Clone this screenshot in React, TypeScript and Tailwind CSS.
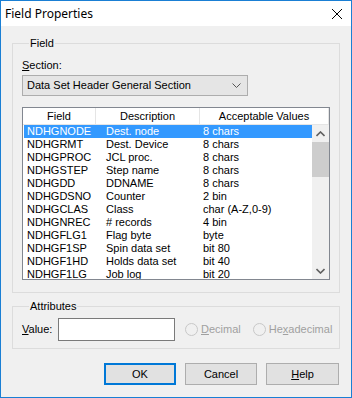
import React from 'react';

const rows = [
  ['NDHGNODE', 'Dest. node', '8 chars'],
  ['NDHGRMT', 'Dest. Device', '8 chars'],
  ['NDHGPROC', 'JCL proc.', '8 chars'],
  ['NDHGSTEP', 'Step name', '8 chars'],
  ['NDHGDD', 'DDNAME', '8 chars'],
  ['NDHGDSNO', 'Counter', '2 bin'],
  ['NDHGCLAS', 'Class', 'char (A-Z,0-9)'],
  ['NDHGNREC', '# records', '4 bin'],
  ['NDHGFLG1', 'Flag byte', 'byte'],
  ['NDHGF1SP', 'Spin data set', 'bit 80'],
  ['NDHGF1HD', 'Holds data set', 'bit 40'],
  ['NDHGF1LG', 'Job log', 'bit 20'],
];

function Radio({ children }: { children: React.ReactNode }) {
  return (
    <div className="flex items-center gap-[3px] text-[#a0a0a0]">
      <span className="w-[13px] h-[13px] rounded-full border border-[#c8c8c8] bg-[#f0f0f0]" />
      <span>{children}</span>
    </div>
  );
}

export default function App() {
  return (
    <div
      className="w-[352px] h-[398px] border border-[#1a7fd4] bg-[#f0f0f0] text-[11px] leading-[13px] text-black flex flex-col"
      style={{ fontFamily: '"Liberation Sans", Arial, sans-serif' }}
    >
      <div className="h-[25px] bg-white flex items-center justify-between pl-[4px] pr-[8px] shrink-0">
        <span className="text-[12px]" style={{ fontFamily: '"Noto Sans", "Open Sans", sans-serif' }}>
          Field Properties
        </span>
        <svg width="12" height="12" viewBox="0 0 12 12" className="mt-[1px]">
          <path d="M1 1 L11 11 M11 1 L1 11" stroke="#000" strokeWidth="1" />
        </svg>
      </div>

      <div className="px-[11px] flex flex-col">
        <fieldset className="mt-[11px] h-[256px] border border-[#dcdcdc] pl-[9px]">
          <legend className="ml-[7px] px-[1px]">Field</legend>
          <div className="mt-[9px]">
            <span className="underline">S</span>ection:
          </div>
          <div className="mt-[3px] w-[226px] h-[21px] border border-[#adadad] bg-[#e5e5e5] flex items-center justify-between pl-[4px] pr-[6px]">
            <span>Data Set Header General Section</span>
            <svg width="9" height="6" viewBox="0 0 9 6">
              <path d="M0.5 0.5 L4.5 4.5 L8.5 0.5" stroke="#555" strokeWidth="1" fill="none" />
            </svg>
          </div>

          <div className="mt-[11px] w-[308px] h-[173px] border border-[#828790] bg-white flex flex-col overflow-hidden">
            <div className="h-[17px] flex shrink-0 bg-white border-b border-[#e5e5e5]">
              <div className="w-[73px] border-r border-[#e5e5e5] flex items-center justify-center">Field</div>
              <div className="w-[104px] border-r border-[#e5e5e5] flex items-center justify-center">Description</div>
              <div className="flex-1 flex items-center justify-center border-r border-[#e5e5e5]">Acceptable Values</div>
            </div>
            <div className="flex flex-1 overflow-hidden">
              <div className="flex-1 pl-[1px] overflow-hidden">
                {rows.map((r, i) => (
                  <div
                    key={r[0]}
                    className={`h-[13px] flex ${i === 0 ? 'bg-[#3399ff] text-white' : ''}`}
                  >
                    <span className="w-[82px] pl-[3px]">{r[0]}</span>
                    <span className="w-[97px]">{r[1]}</span>
                    <span>{r[2]}</span>
                  </div>
                ))}
              </div>
              <div className="w-[17px] bg-[#f0f0f0] flex flex-col items-center">
                <div className="h-[17px] flex items-center justify-center">
                  <svg width="9" height="6" viewBox="0 0 9 6">
                    <path d="M0.5 5 L4.5 1 L8.5 5" stroke="#606060" strokeWidth="1.6" fill="none" />
                  </svg>
                </div>
                <div className="w-[17px] h-[35px] bg-[#cdcdcd]" />
                <div className="flex-1" />
                <div className="h-[17px] flex items-center justify-center">
                  <svg width="9" height="6" viewBox="0 0 9 6">
                    <path d="M0.5 1 L4.5 5 L8.5 1" stroke="#606060" strokeWidth="1.6" fill="none" />
                  </svg>
                </div>
              </div>
            </div>
          </div>
        </fieldset>

        <fieldset className="mt-[7px] h-[49px] border border-[#dcdcdc] pl-[9px]">
          <legend className="ml-[7px] px-[1px]">Attributes</legend>
          <div className="mt-[5px] flex items-center">
            <span className="w-[36px]">
              <span className="underline">V</span>alue:
            </span>
            <div className="w-[117px] h-[23px] border border-[#7a7a7a] bg-white" />
            <div className="ml-[10px]">
              <Radio>
                <span className="underline">D</span>ecimal
              </Radio>
            </div>
            <div className="ml-[12px]">
              <Radio>
                He<span className="underline">x</span>adecimal
              </Radio>
            </div>
          </div>
        </fieldset>

        <div className="mt-[14px] flex justify-end gap-[9px] pr-[1px]">
          <button className="w-[72px] h-[22px] border-2 border-[#0078d7] bg-[#e1e1e1]">OK</button>
          <button className="w-[72px] h-[22px] border border-[#adadad] bg-[#e1e1e1]">Cancel</button>
          <button className="w-[73px] h-[22px] border border-[#adadad] bg-[#e1e1e1]">
            <span className="underline">H</span>elp
          </button>
        </div>
      </div>
    </div>
  );
}
